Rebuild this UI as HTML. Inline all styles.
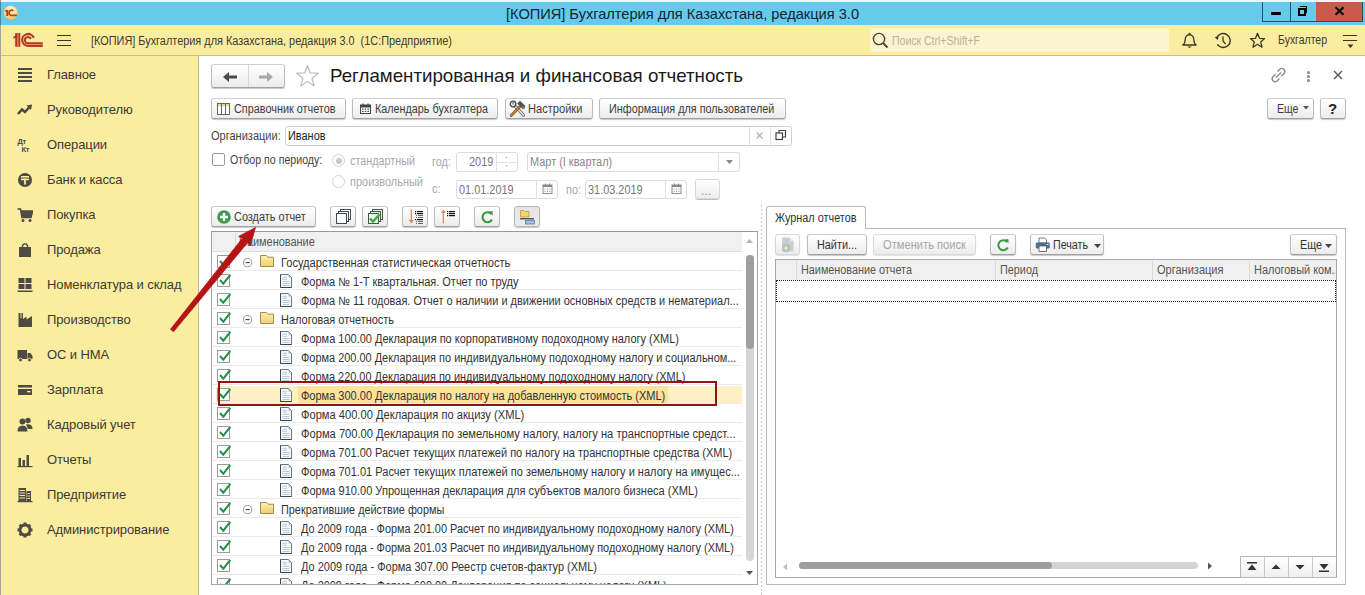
<!DOCTYPE html>
<html><head><meta charset="utf-8">
<style>
*{box-sizing:border-box;margin:0;padding:0}
html,body{width:1365px;height:595px;overflow:hidden;background:#fff;font-family:"Liberation Sans",sans-serif;color:#333}
.a{position:absolute}
.t{position:absolute;white-space:nowrap;line-height:1}
/* title bar */
#tb{left:0;top:0;width:1365px;height:25px;background:#66caea;border-top:2px solid #eef6f9}
#tbl{left:0;top:0;width:1px;height:595px;background:rgba(40,40,30,0.42);z-index:5}
/* top panel */
#tp{left:1px;top:25px;width:1364px;height:31px;background:#fbeda0;border-bottom:1px solid #cfbd74}
/* sidebar */
#sb{left:1px;top:56px;width:198px;height:539px;background:#fbeda0;border-right:1px solid #c6bd8c}
.si{position:absolute;left:47px;font-size:13px;color:#3b3a33;letter-spacing:-0.1px;white-space:nowrap;line-height:1}
.ic{position:absolute;left:17px}
.btn{position:absolute;height:21px;border:1px solid #c6c6c6;border-radius:3px;background:linear-gradient(#fff,#f1f1f1);box-shadow:0 1px 0 #a9a9a9;font-size:12px;color:#333;white-space:nowrap;line-height:19px}
.b{position:absolute;border:1px solid #bdbdbd;border-top-color:#cfcfcf;border-bottom-color:#a0a0a0;border-radius:3px;background:linear-gradient(#ffffff,#f4f4f4 60%,#ececec);box-shadow:0 1px 1px rgba(0,0,0,.22)}
.inp{position:absolute;height:19px;border:1px solid #d4d4d4;border-radius:3px;background:#fff;font-size:12px;line-height:17px;white-space:nowrap}
</style></head><body>
<div id="tb" class="a"></div>
<div id="tbl" class="a"></div>
<div class="t" style="left:506px;top:7px;font-size:14.6px;color:#0f2535">[КОПИЯ] Бухгалтерия для Казахстана, редакция 3.0</div>

<div id="tp" class="a"></div>

<!-- window buttons -->
<div class="a" style="left:1262px;top:2px;width:101px;height:20px;border:1px solid #1d4f6e;border-top:none;"></div>
<div class="a" style="left:1290px;top:2px;width:1px;height:20px;background:#1d4f6e"></div>
<div class="a" style="left:1316px;top:2px;width:46px;height:19px;background:#c9594b"></div>
<div class="a" style="left:1271px;top:12px;width:10px;height:3px;background:#050505"></div>
<div class="a" style="left:1300px;top:6px;width:7px;height:7px;border-top:1px solid #050505;border-right:1px solid #050505"></div>
<div class="a" style="left:1298px;top:8px;width:8px;height:8px;border:2px solid #050505"></div>
<svg class="a" style="left:1334px;top:6px" width="11" height="10" viewBox="0 0 11 10"><path d="M1.5 1.2 L9.5 8.8 M9.5 1.2 L1.5 8.8" stroke="#0a0a0a" stroke-width="2.1"/></svg>
<!-- app icon -->
<svg class="a" style="left:3px;top:5px" width="16" height="16" viewBox="0 0 16 16"><defs><radialGradient id="ag" cx="0.5" cy="0.3" r="0.7"><stop offset="0" stop-color="#fffbe6"/><stop offset="0.6" stop-color="#fbdc8a"/><stop offset="1" stop-color="#f0b860"/></radialGradient></defs><circle cx="7.7" cy="7.7" r="7" fill="url(#ag)"/><rect x="3.3" y="5" width="2" height="6" fill="#b8400f"/><path d="M1.8 6.6 L4 5" stroke="#b8400f" stroke-width="1.2"/><path d="M10.3 5.8 A2.6 2.6 0 1 0 9 10.4 H13.8" stroke="#b8400f" stroke-width="1.7" fill="none"/></svg>
<!-- logo -->
<svg class="a" style="left:13px;top:32px" width="31" height="16" viewBox="0 0 31 16">
<path d="M0.6 5.6 L4 3.2 V5.6 Z" fill="#b23a22" stroke="#b23a22" stroke-width="1.2"/>
<rect x="2.2" y="1" width="2.4" height="13.8" fill="#b23a22"/><rect x="5.2" y="1" width="2.1" height="13.8" fill="#b23a22"/><rect x="4.6" y="2" width="0.6" height="12.8" fill="#e27a62"/>
<path d="M20.8 5.8 A6 6 0 1 0 15.8 13.9 H29.8" stroke="#b23a22" stroke-width="2.1" fill="none"/>
<path d="M17.8 7 A3.1 3.1 0 1 0 15.8 11.2 H29.8" stroke="#b23a22" stroke-width="2" fill="none"/>
<path d="M19.4 6.4 A4.55 4.55 0 1 0 15.8 12.55 H29.8" stroke="#e8836a" stroke-width="0.6" fill="none"/>
</svg>
<div class="a" style="left:57px;top:35px;width:14px;height:1.4px;background:#3b3526"></div>
<div class="a" style="left:57px;top:40px;width:14px;height:1.4px;background:#3b3526"></div>
<div class="a" style="left:57px;top:45px;width:14px;height:1.4px;background:#3b3526"></div>
<div class="t" style="left:91px;top:35px;font-size:12px;color:#3d3a30;transform:scaleX(0.908);transform-origin:0 0">[КОПИЯ] Бухгалтерия для Казахстана, редакция 3.0&nbsp; (1С:Предприятие)</div>
<!-- search -->
<div class="a" style="left:870px;top:28px;width:299px;height:24px;background:#fcf4d0;border-radius:2px"></div>
<svg class="a" style="left:872px;top:32px" width="17" height="17" viewBox="0 0 17 17"><circle cx="7" cy="7" r="5.6" stroke="#4a4430" stroke-width="1.4" fill="none"/><path d="M11 11 L15.5 15.5" stroke="#4a4430" stroke-width="1.8"/></svg>
<div class="t" style="left:892px;top:35px;font-size:12px;color:#b9b39c;transform:scaleX(0.875);transform-origin:0 0">Поиск Ctrl+Shift+F</div>
<!-- bell -->
<svg class="a" style="left:1181px;top:32px" width="17" height="17" viewBox="0 0 17 17"><path d="M1.8 13 Q4 11.5 4.2 7.5 Q4.5 3.2 8.5 2.6 Q12.5 3.2 12.8 7.5 Q13 11.5 15.2 13 Z" stroke="#3b3526" stroke-width="1.3" fill="none" stroke-linejoin="round"/><circle cx="8.5" cy="1.8" r="1" fill="#3b3526"/><path d="M6.2 14.6 H10.8 L8.5 16 Z" fill="#3b3526"/></svg>
<!-- history -->
<svg class="a" style="left:1214px;top:32px" width="17" height="17" viewBox="0 0 17 17"><path d="M2.6 6.2 A7 7 0 1 1 3.4 12.4" stroke="#3b3526" stroke-width="1.4" fill="none"/><path d="M0.6 5 L4.6 4.4 L3.6 8 Z" fill="#3b3526"/><path d="M9 4.4 V9 L11.6 12" stroke="#3b3526" stroke-width="1.3" fill="none"/></svg>
<!-- star -->
<svg class="a" style="left:1249px;top:32px" width="17" height="17" viewBox="0 0 17 17"><path d="M8.5 1.3 L10.5 6.3 L15.6 6.6 L11.7 9.9 L13 15.2 L8.5 12.3 L4 15.2 L5.3 9.9 L1.4 6.6 L6.5 6.3 Z" stroke="#3b3526" stroke-width="1.3" fill="none" stroke-linejoin="round"/></svg>
<div class="t" style="left:1278px;top:34px;font-size:12px;color:#3d3a30;transform:scaleX(0.873);transform-origin:0 0">Бухгалтер</div>
<div class="a" style="left:1343px;top:35px;width:14px;height:1.4px;background:#3b3526"></div>
<div class="a" style="left:1343px;top:40px;width:14px;height:1.4px;background:#3b3526"></div>
<svg class="a" style="left:1347px;top:44px" width="7" height="5" viewBox="0 0 7 5"><path d="M0.5 0.5 H6.5 L3.5 4 Z" fill="#3b3526"/></svg>
<div id="sb" class="a"></div>
<svg class="a" style="left:17px;top:67px" width="16" height="16" viewBox="0 0 16 16"><rect x="1" y="1" width="14" height="2" fill="#4d4b42"/><rect x="1" y="5" width="14" height="2" fill="#4d4b42"/><rect x="1" y="9" width="14" height="2" fill="#4d4b42"/><rect x="1" y="13" width="14" height="2" fill="#4d4b42"/></svg>
<div class="si" style="top:68px">Главное</div>
<svg class="a" style="left:17px;top:102px" width="16" height="16" viewBox="0 0 16 16"><path d="M1 12 L5 7.5 L8 10 L12.5 5" stroke="#4d4b42" stroke-width="2.6" fill="none" stroke-linejoin="miter"/><path d="M9.5 3.5 L15 2.5 L14 8 Z" fill="#4d4b42"/></svg>
<div class="si" style="top:103px">Руководителю</div>
<svg class="a" style="left:17px;top:137px" width="16" height="16" viewBox="0 0 16 16"><text x="0.5" y="7" font-family="Liberation Sans" font-weight="bold" font-size="7.5" fill="#4d4b42" letter-spacing="-0.3">Дт</text><text x="4.5" y="15" font-family="Liberation Sans" font-weight="bold" font-size="7.5" fill="#4d4b42" letter-spacing="-0.3">Кт</text></svg>
<div class="si" style="top:138px">Операции</div>
<svg class="a" style="left:17px;top:172px" width="16" height="16" viewBox="0 0 16 16"><circle cx="8" cy="8" r="7" fill="#4d4b42"/><rect x="4" y="4" width="8" height="1.6" fill="#fbeda0"/><rect x="4" y="6.6" width="8" height="1.6" fill="#fbeda0"/><rect x="7.1" y="6.6" width="1.8" height="6" fill="#fbeda0"/></svg>
<div class="si" style="top:173px">Банк и касса</div>
<svg class="a" style="left:17px;top:207px" width="16" height="16" viewBox="0 0 16 16"><path d="M0.5 2 H3.5 L5 10.5 H14 L15.5 4 H4" stroke="#4d4b42" stroke-width="1.6" fill="none"/><path d="M4.2 4 H15.3 L13.8 10 H5.2 Z" fill="#4d4b42"/><circle cx="6" cy="13.5" r="1.5" fill="#4d4b42"/><circle cx="13" cy="13.5" r="1.5" fill="#4d4b42"/></svg>
<div class="si" style="top:208px">Покупка</div>
<svg class="a" style="left:17px;top:242px" width="16" height="16" viewBox="0 0 16 16"><path d="M2 5 H14 V15 H2 Z" fill="#4d4b42"/><path d="M5.5 6 V3.5 Q8 0 10.5 3.5 V6" stroke="#4d4b42" stroke-width="1.4" fill="none"/></svg>
<div class="si" style="top:243px">Продажа</div>
<svg class="a" style="left:17px;top:277px" width="16" height="16" viewBox="0 0 16 16"><rect x="1.5" y="1" width="6" height="5" fill="#4d4b42"/><rect x="8.5" y="1" width="6" height="5" fill="#4d4b42"/><rect x="1.5" y="7" width="6" height="5" fill="#4d4b42"/><rect x="8.5" y="7" width="6" height="5" fill="#4d4b42"/><rect x="0.5" y="13.5" width="15" height="1.5" fill="#4d4b42"/></svg>
<div class="si" style="top:278px">Номенклатура и склад</div>
<svg class="a" style="left:17px;top:312px" width="16" height="16" viewBox="0 0 16 16"><path d="M1.5 15 V1 H3.5 V6 L4.5 6 V1 H6 V7 L9.5 4.5 V7.5 L15 4 V15 Z" fill="#4d4b42"/></svg>
<div class="si" style="top:313px">Производство</div>
<svg class="a" style="left:17px;top:347px" width="16" height="16" viewBox="0 0 16 16"><path d="M0.5 3 H10 V12 H0.5 Z" fill="#4d4b42"/><path d="M10.5 6 H13.5 L15.5 9 V12 H10.5 Z" fill="#4d4b42"/><circle cx="3.5" cy="13" r="1.8" fill="#4d4b42" stroke="#fbeda0" stroke-width="0.8"/><circle cx="12.5" cy="13" r="1.8" fill="#4d4b42" stroke="#fbeda0" stroke-width="0.8"/></svg>
<div class="si" style="top:348px">ОС и НМА</div>
<svg class="a" style="left:17px;top:382px" width="16" height="16" viewBox="0 0 16 16"><rect x="1" y="3" width="14" height="10" fill="#4d4b42"/><rect x="1" y="5.5" width="14" height="1.5" fill="#fbeda0"/><rect x="10" y="9" width="3.5" height="1.3" fill="#fbeda0"/></svg>
<div class="si" style="top:383px">Зарплата</div>
<svg class="a" style="left:17px;top:417px" width="16" height="16" viewBox="0 0 16 16"><circle cx="5.5" cy="4.5" r="3" fill="#4d4b42"/><path d="M0.5 14.5 Q0.5 8.5 5.5 8.5 Q10.5 8.5 10.5 14.5 Z" fill="#4d4b42"/><circle cx="11" cy="3.5" r="2.7" fill="#4d4b42"/><path d="M9 7.5 Q15.5 6.5 15.5 12 H11 Z" fill="#4d4b42"/></svg>
<div class="si" style="top:418px">Кадровый учет</div>
<svg class="a" style="left:17px;top:452px" width="16" height="16" viewBox="0 0 16 16"><rect x="1.5" y="6" width="2.5" height="8" fill="#4d4b42"/><rect x="5.5" y="8" width="2.5" height="6" fill="#4d4b42"/><rect x="9.5" y="3" width="2.5" height="11" fill="#4d4b42"/><rect x="0.5" y="14" width="15" height="1.2" fill="#4d4b42"/></svg>
<div class="si" style="top:453px">Отчеты</div>
<svg class="a" style="left:17px;top:487px" width="16" height="16" viewBox="0 0 16 16"><path d="M1.5 1 H9 V14 H1.5 Z" fill="#4d4b42"/><path d="M9.5 4 H14 V14 H9.5 Z" fill="#4d4b42"/><g fill="#fbeda0"><rect x="2.5" y="3" width="5.5" height="1"/><rect x="2.5" y="5.5" width="5.5" height="1"/><rect x="2.5" y="8" width="5.5" height="1"/><rect x="2.5" y="10.5" width="5.5" height="1"/><rect x="10.5" y="6" width="2.5" height="1"/><rect x="10.5" y="8.5" width="2.5" height="1"/><rect x="10.5" y="11" width="2.5" height="1"/></g><rect x="0.5" y="14" width="15" height="1.2" fill="#4d4b42"/></svg>
<div class="si" style="top:488px">Предприятие</div>
<svg class="a" style="left:17px;top:522px" width="16" height="16" viewBox="0 0 16 16"><g transform="translate(8 8)"><circle r="5" fill="none" stroke="#4d4b42" stroke-width="2.8"/><rect x="-1.5" y="-7.5" width="3" height="3.5" fill="#4d4b42" transform="rotate(0)"/><rect x="-1.5" y="-7.5" width="3" height="3.5" fill="#4d4b42" transform="rotate(45)"/><rect x="-1.5" y="-7.5" width="3" height="3.5" fill="#4d4b42" transform="rotate(90)"/><rect x="-1.5" y="-7.5" width="3" height="3.5" fill="#4d4b42" transform="rotate(135)"/><rect x="-1.5" y="-7.5" width="3" height="3.5" fill="#4d4b42" transform="rotate(180)"/><rect x="-1.5" y="-7.5" width="3" height="3.5" fill="#4d4b42" transform="rotate(225)"/><rect x="-1.5" y="-7.5" width="3" height="3.5" fill="#4d4b42" transform="rotate(270)"/><rect x="-1.5" y="-7.5" width="3" height="3.5" fill="#4d4b42" transform="rotate(315)"/></g></svg>
<div class="si" style="top:523px">Администрирование</div>

<!--FORM-->
<div class="b" style="left:211px;top:64px;width:74px;height:24px;"></div>
<div class="a" style="left:248px;top:65px;width:1px;height:22px;background:#d6d6d6"></div>
<svg class="a" style="left:222px;top:71px" width="16" height="12" viewBox="0 0 16 12"><path d="M1 6 L7 1 V4.5 H15 V7.5 H7 V11 Z" fill="#4a4a4a"/></svg>
<svg class="a" style="left:258px;top:71px" width="16" height="12" viewBox="0 0 16 12"><path d="M15 6 L9 1 V4.5 H1 V7.5 H9 V11 Z" fill="#a8a8a8"/></svg>
<svg class="a" style="left:295px;top:64px" width="25" height="24" viewBox="0 0 25 24"><path d="M12.5 1.5 L15.3 9 L23.3 9.2 L17 14.2 L19.2 22 L12.5 17.5 L5.8 22 L8 14.2 L1.7 9.2 L9.7 9 Z" stroke="#bdbdbd" stroke-width="1.2" fill="none" stroke-linejoin="round"/></svg>
<div class="t" style="left:330px;top:66px;font-size:19px;color:#1a1a1a;transform:scaleX(0.9851);transform-origin:0 0;">Регламентированная и финансовая отчетность</div>
<svg class="a" style="left:1270px;top:67px" width="17" height="16" viewBox="0 0 17 16"><g stroke="#8a8a8a" stroke-width="1.4" fill="none"><path d="M7.5 4.5 L10 2 Q12 0.5 14 2.5 Q15.8 4.5 14 6.5 L11.5 9"/><path d="M9.5 11.5 L7 14 Q5 15.8 3 13.8 Q1.2 11.8 3 9.8 L5.5 7.3"/><path d="M6 10.5 L11 5.5"/></g></svg>
<div class="a" style="left:1307px;top:71px;width:3px;height:3px;background:#888;border-radius:50%"></div>
<div class="a" style="left:1307px;top:75px;width:3px;height:3px;background:#888;border-radius:50%"></div>
<div class="a" style="left:1307px;top:79px;width:3px;height:3px;background:#888;border-radius:50%"></div>
<svg class="a" style="left:1333px;top:70px" width="10" height="10" viewBox="0 0 10 10"><path d="M1 1 L9 9 M9 1 L1 9" stroke="#555" stroke-width="1.4"/></svg>
<div class="b" style="left:211px;top:98px;width:135px;height:21px;"></div>
<svg class="a" style="left:217px;top:103px" width="13" height="12" viewBox="0 0 13 12"><rect x="0.5" y="0.5" width="12" height="11" fill="#fff" stroke="#555" stroke-width="0.9"/><rect x="1" y="1" width="11" height="2.3" fill="#e6dc86"/><path d="M4.5 1 V11.5 M8.5 1 V11.5" stroke="#555" stroke-width="0.9"/></svg>
<div class="t" style="left:234px;top:103px;font-size:12px;color:#3c3c3c;transform:scaleX(0.9049);transform-origin:0 0;">Справочник отчетов</div>
<div class="b" style="left:352px;top:98px;width:146px;height:21px;"></div>
<svg class="a" style="left:360px;top:103px" width="11" height="11" viewBox="0 0 11 11"><rect x="0.5" y="2" width="10" height="8.5" fill="#fff" stroke="#444"/><rect x="0.5" y="2" width="10" height="2.5" fill="#444"/><path d="M3 0.5 V3 M8 0.5 V3" stroke="#444" stroke-width="1.2"/><g fill="#444"><rect x="2" y="5.5" width="1.5" height="1.2"/><rect x="4.7" y="5.5" width="1.5" height="1.2"/><rect x="7.4" y="5.5" width="1.5" height="1.2"/><rect x="2" y="7.8" width="1.5" height="1.2"/><rect x="4.7" y="7.8" width="1.5" height="1.2"/><rect x="7.4" y="7.8" width="1.5" height="1.2"/></g></svg>
<div class="t" style="left:375px;top:103px;font-size:12px;color:#3c3c3c;transform:scaleX(0.8991);transform-origin:0 0;">Календарь бухгалтера</div>
<div class="b" style="left:505px;top:98px;width:88px;height:21px;"></div>
<svg class="a" style="left:509px;top:100px" width="19" height="18" viewBox="0 0 19 18"><path d="M5 5 L14.5 15" stroke="#666" stroke-width="3.2" stroke-linecap="round"/><path d="M5 5 L14.5 15" stroke="#e4e4e4" stroke-width="1.6" stroke-linecap="round"/><circle cx="4" cy="4" r="2.8" fill="#eee" stroke="#4a4a4a" stroke-width="1.3"/><path d="M4 2.2 V4.5" stroke="#4a4a4a" stroke-width="1"/><path d="M2.2 15.5 L11.5 6" stroke="#8a5424" stroke-width="2.8" stroke-linecap="round"/><path d="M2.2 15.5 L11.5 6" stroke="#c98a4a" stroke-width="1.1" stroke-linecap="round"/><path d="M8 3.5 L11 0.8 L16.5 6 L13.8 9 Z" fill="#555"/><circle cx="14.5" cy="7.5" r="1.6" fill="#777"/></svg>
<div class="t" style="left:528px;top:103px;font-size:12px;color:#3c3c3c;transform:scaleX(0.9245);transform-origin:0 0;">Настройки</div>
<div class="b" style="left:599px;top:98px;width:187px;height:21px;"></div>
<div class="t" style="left:609px;top:103px;font-size:12px;color:#3c3c3c;transform:scaleX(0.9007);transform-origin:0 0;">Информация для пользователей</div>
<div class="b" style="left:1267px;top:98px;width:47px;height:21px;"></div>
<div class="t" style="left:1277px;top:103px;font-size:12px;color:#3c3c3c;transform:scaleX(0.8804);transform-origin:0 0;">Еще</div>
<svg class="a" style="left:1303px;top:106px" width="6" height="4" viewBox="0 0 6 4"><path d="M0 0 H6 L3 3.5 Z" fill="#555"/></svg>
<div class="b" style="left:1320px;top:98px;width:26px;height:21px;"></div>
<div class="t" style="left:1328px;top:101px;font-size:15px;color:#222;font-weight:bold;">?</div>
<div class="t" style="left:211px;top:130px;font-size:12px;color:#444;transform:scaleX(0.9180);transform-origin:0 0;">Организации:</div>
<div class="a" style="left:285px;top:126px;width:507px;height:20px;border:1px solid #d0d0d0;border-radius:3px;background:#fff"></div>
<div class="a" style="left:749px;top:127px;width:1px;height:18px;background:#e0e0e0"></div>
<div class="a" style="left:770px;top:127px;width:1px;height:18px;background:#e0e0e0"></div>
<div class="t" style="left:288px;top:130px;font-size:12px;color:#222;transform:scaleX(0.9100);transform-origin:0 0;">Иванов</div>
<svg class="a" style="left:755px;top:131px" width="9" height="9" viewBox="0 0 9 9"><path d="M1.5 1.5 L7.5 7.5 M7.5 1.5 L1.5 7.5" stroke="#b0b0b0" stroke-width="1.2"/></svg>
<svg class="a" style="left:775px;top:129px" width="12" height="12" viewBox="0 0 12 12"><rect x="1" y="4" width="6.5" height="6.5" fill="#fff" stroke="#444" stroke-width="1.2"/><path d="M4 4 V1.5 H10.5 V8 H7.5" fill="none" stroke="#444" stroke-width="1.2"/></svg>
<div class="a" style="left:212px;top:153px;width:13px;height:13px;border:1px solid #9a9a9a;border-radius:2px;background:#fff"></div>
<div class="t" style="left:230px;top:154px;font-size:12px;color:#444;transform:scaleX(0.8859);transform-origin:0 0;">Отбор по периоду:</div>
<div class="a" style="left:332px;top:154px;width:13px;height:13px;border:1px solid #d2d2d2;border-radius:50%;background:#fff"></div>
<div class="a" style="left:335.5px;top:157.5px;width:6px;height:6px;border-radius:50%;background:#c8c8c8"></div>
<div class="t" style="left:350px;top:155px;font-size:12px;color:#a9a9a9;transform:scaleX(0.9002);transform-origin:0 0;">стандартный</div>
<div class="a" style="left:332px;top:175px;width:13px;height:13px;border:1px solid #d2d2d2;border-radius:50%;background:#fff"></div>
<div class="t" style="left:350px;top:176px;font-size:12px;color:#a9a9a9;transform:scaleX(0.9134);transform-origin:0 0;">произвольный</div>
<div class="t" style="left:432px;top:156px;font-size:12px;color:#a9a9a9;transform:scaleX(0.9100);transform-origin:0 0;">год:</div>
<div class="a" style="left:456px;top:152px;width:62px;height:20px;border:1px solid #dcdcdc;border-radius:3px;background:#fff"></div>
<div class="a" style="left:496px;top:153px;width:1px;height:18px;background:#e2e2e2"></div>
<div class="a" style="left:497px;top:162px;width:20px;height:1px;background:#e2e2e2"></div>
<div class="t" style="left:469px;top:156px;font-size:12px;color:#777;transform:scaleX(0.9100);transform-origin:0 0;">2019</div>
<svg class="a" style="left:503px;top:155px" width="7" height="15" viewBox="0 0 7 15"><path d="M2.5 3 L3.5 1.8 L4.5 3 Z M2.5 10.5 L3.5 11.7 L4.5 10.5 Z" fill="#888"/></svg>
<div class="a" style="left:527px;top:152px;width:213px;height:20px;border:1px solid #dcdcdc;border-radius:3px;background:#fff"></div>
<div class="a" style="left:718px;top:153px;width:1px;height:18px;background:#e2e2e2"></div>
<div class="t" style="left:530px;top:156px;font-size:12px;color:#888;transform:scaleX(0.9100);transform-origin:0 0;">Март (I квартал)</div>
<svg class="a" style="left:726px;top:160px" width="7" height="4" viewBox="0 0 7 4"><path d="M0 0 H7 L3.5 4 Z" fill="#888"/></svg>
<div class="t" style="left:432px;top:183px;font-size:12px;color:#a9a9a9;transform:scaleX(0.9100);transform-origin:0 0;">с:</div>
<div class="a" style="left:456px;top:180px;width:102px;height:19px;border:1px solid #dcdcdc;border-radius:3px;background:#fff"></div>
<div class="a" style="left:536px;top:181px;width:1px;height:17px;background:#e2e2e2"></div>
<div class="t" style="left:459px;top:184px;font-size:12px;color:#777;transform:scaleX(0.9100);transform-origin:0 0;">01.01.2019</div>
<svg class="a" style="left:542px;top:183px" width="12" height="12" viewBox="0 0 12 12"><rect x="1" y="2" width="9" height="8.5" fill="#fff" stroke="#8a8a8a"/><rect x="1" y="2" width="9" height="2" fill="#8a8a8a"/><path d="M3.5 0.5 V3 M7.5 0.5 V3" stroke="#8a8a8a"/><g fill="#999"><rect x="2.5" y="5.5" width="1.2" height="1"/><rect x="4.9" y="5.5" width="1.2" height="1"/><rect x="7.3" y="5.5" width="1.2" height="1"/><rect x="2.5" y="7.8" width="1.2" height="1"/><rect x="4.9" y="7.8" width="1.2" height="1"/><rect x="7.3" y="7.8" width="1.2" height="1"/></g></svg>
<div class="t" style="left:566px;top:184px;font-size:12px;color:#a9a9a9;transform:scaleX(0.9100);transform-origin:0 0;">по:</div>
<div class="a" style="left:585px;top:180px;width:102px;height:19px;border:1px solid #dcdcdc;border-radius:3px;background:#fff"></div>
<div class="a" style="left:665px;top:181px;width:1px;height:17px;background:#e2e2e2"></div>
<div class="t" style="left:588px;top:184px;font-size:12px;color:#777;transform:scaleX(0.9100);transform-origin:0 0;">31.03.2019</div>
<svg class="a" style="left:671px;top:183px" width="12" height="12" viewBox="0 0 12 12"><rect x="1" y="2" width="9" height="8.5" fill="#fff" stroke="#8a8a8a"/><rect x="1" y="2" width="9" height="2" fill="#8a8a8a"/><path d="M3.5 0.5 V3 M7.5 0.5 V3" stroke="#8a8a8a"/><g fill="#999"><rect x="2.5" y="5.5" width="1.2" height="1"/><rect x="4.9" y="5.5" width="1.2" height="1"/><rect x="7.3" y="5.5" width="1.2" height="1"/><rect x="2.5" y="7.8" width="1.2" height="1"/><rect x="4.9" y="7.8" width="1.2" height="1"/><rect x="7.3" y="7.8" width="1.2" height="1"/></g></svg>
<div class="b" style="left:695px;top:179px;width:25px;height:20px;border-color:#d8d8d8;box-shadow:0 1px 0 #bdbdbd"></div>
<div class="t" style="left:701px;top:185px;font-size:12px;color:#999;">...</div>
<div class="b" style="left:211px;top:206px;width:105px;height:21px;"></div>
<svg class="a" style="left:217px;top:210px" width="14" height="14" viewBox="0 0 14 14"><circle cx="7" cy="7" r="6.8" fill="#3e9c4c"/><path d="M7 3 V11 M3 7 H11" stroke="#fff" stroke-width="2.4"/></svg>
<div class="t" style="left:234px;top:211px;font-size:12px;color:#3c3c3c;transform:scaleX(0.9103);transform-origin:0 0;">Создать отчет</div>
<div class="b" style="left:330px;top:206px;width:26px;height:21px;"></div>
<svg class="a" style="left:335px;top:208px" width="17" height="17" viewBox="0 0 17 17"><g fill="#fff" stroke="#3d4a55" stroke-width="1"><rect x="5.5" y="1.5" width="10" height="10"/><rect x="3.5" y="3.5" width="10" height="10"/><rect x="1.5" y="5.5" width="10" height="10"/></g></svg>
<div class="b" style="left:362px;top:206px;width:26px;height:21px;"></div>
<svg class="a" style="left:367px;top:208px" width="17" height="17" viewBox="0 0 17 17"><g fill="#eaf3e8" stroke="#3d5a45" stroke-width="1"><rect x="5.5" y="1.5" width="10" height="10"/><rect x="3.5" y="3.5" width="10" height="10"/><rect x="1.5" y="5.5" width="10" height="10"/></g><path d="M3 10.5 L6 13.5 L12.5 6.5" stroke="#3faa3a" stroke-width="2.4" fill="none"/></svg>
<div class="b" style="left:402px;top:206px;width:26px;height:21px;"></div>
<svg class="a" style="left:405px;top:208px" width="20" height="17" viewBox="0 0 20 17"><path d="M6.3 1.5 V14" stroke="#d0855a" stroke-width="1.2"/><path d="M4 12 H8.6 L6.3 15.5 Z" fill="#d0855a"/><g fill="#111"><rect x="10" y="3" width="1.2" height="1.2"/><rect x="12" y="3" width="6" height="1.2"/><rect x="10" y="5" width="1.2" height="1.2"/><rect x="12" y="5" width="6" height="1.2"/><rect x="10" y="11" width="1.2" height="1.2"/><rect x="12" y="11" width="6" height="1.2"/></g><g fill="#666"><rect x="11" y="7" width="1" height="1"/><rect x="13" y="7" width="5" height="1"/><rect x="11" y="9" width="1" height="1"/><rect x="13" y="9" width="5" height="1"/><rect x="11" y="13" width="1" height="1"/><rect x="13" y="13" width="5" height="1"/><rect x="11" y="15" width="1" height="1"/><rect x="13" y="15" width="5" height="1"/></g></svg>
<div class="b" style="left:434px;top:206px;width:26px;height:21px;"></div>
<svg class="a" style="left:437px;top:208px" width="20" height="17" viewBox="0 0 20 17"><path d="M6.3 3 V15.5" stroke="#d0855a" stroke-width="1.2"/><path d="M4 5 H8.6 L6.3 1.5 Z" fill="#d0855a"/><g fill="#111"><rect x="10" y="3" width="1.2" height="1.2"/><rect x="12" y="3" width="6" height="1.2"/><rect x="10" y="5" width="1.2" height="1.2"/><rect x="12" y="5" width="6" height="1.2"/><rect x="10" y="7" width="1.2" height="1.2"/><rect x="12" y="7" width="6" height="1.2"/></g></svg>
<div class="b" style="left:474px;top:206px;width:26px;height:21px;"></div>
<svg class="a" style="left:480px;top:210px" width="14" height="14" viewBox="0 0 14 14"><path d="M11.5 4.2 A5 5 0 1 0 12 9.5" stroke="#3a9a3e" stroke-width="2.2" fill="none"/><path d="M8.5 1.2 H12.6 V5.5 Z" fill="#3a9a3e"/></svg>
<div class="b" style="left:514px;top:206px;width:26px;height:21px;background:linear-gradient(#e4e4e4,#ececec);border-color:#b5b5b5"></div>
<svg class="a" style="left:519px;top:208px" width="17" height="17" viewBox="0 0 17 17"><path d="M1.5 2.5 H5 L6 3.5 H10 V9 H1.5 Z" fill="#f4d57a" stroke="#b8973a" stroke-width="0.8"/><rect x="1" y="10.2" width="14" height="1.2" fill="#333"/><rect x="6.5" y="12.5" width="9" height="3.5" fill="#9cc0e6" stroke="#5b7fa8" stroke-width="0.8"/></svg>
<div class="a" style="left:211px;top:231px;width:547px;height:354px;border:1px solid #a6a6a6;border-top-color:#9a9a9a;background:#fff"></div>
<div class="a" style="left:212px;top:232px;width:530px;height:20px;background:#f0f0f0;border-bottom:1px solid #dedede"></div>
<div class="a" style="left:235px;top:233px;width:1px;height:19px;background:#dcdcdc"></div>
<div class="t" style="left:239px;top:236px;font-size:12px;color:#555;transform:scaleX(0.9100);transform-origin:0 0;">Наименование</div>
<div class="a" style="left:212px;top:252px;width:530px;height:332px;overflow:hidden">
<div class="a" style="left:0px;top:18px;width:530px;height:1px;background:#ebebeb"></div>
<svg class="a" style="left:5px;top:3px" width="14" height="13" viewBox="0 0 14 13"><rect x="0.5" y="0.5" width="12" height="12" fill="#fff" stroke="#9b9b9b"/><path d="M3 6 L6.3 9.6 L13.3 1" stroke="#239048" stroke-width="2" fill="none"/></svg>
<svg class="a" style="left:31px;top:6px" width="10" height="10" viewBox="0 0 10 10"><circle cx="4.6" cy="4.6" r="4.1" fill="#fff" stroke="#8c8c8c" stroke-width="0.9"/><path d="M2.5 4.6 H6.7" stroke="#444" stroke-width="1.1"/></svg>
<svg class="a" style="left:48px;top:3px" width="14" height="12" viewBox="0 0 14 12"><defs><linearGradient id="fg" x1="0" y1="0" x2="0" y2="1"><stop offset="0" stop-color="#fdf0b0"/><stop offset="1" stop-color="#efcf72"/></linearGradient></defs><path d="M0.5 0.5 H6.5 L8 2.2 H13.5 V11.5 H0.5 Z" fill="url(#fg)" stroke="#a48c44"/></svg>
<div class="t" style="left:68.5px;top:5px;font-size:12px;color:#333;transform:scaleX(0.9228);transform-origin:0 0;">Государственная статистическая отчетность</div>
<div class="a" style="left:0px;top:37px;width:530px;height:1px;background:#ebebeb"></div>
<svg class="a" style="left:5px;top:22px" width="14" height="13" viewBox="0 0 14 13"><rect x="0.5" y="0.5" width="12" height="12" fill="#fff" stroke="#9b9b9b"/><path d="M3 6 L6.3 9.6 L13.3 1" stroke="#239048" stroke-width="2" fill="none"/></svg>
<svg class="a" style="left:68px;top:22px" width="12" height="14" viewBox="0 0 12 14"><path d="M0.5 0.5 H8.5 L11.5 3.5 V13.5 H0.5 Z" fill="#f5f9fc" stroke="#6c7680"/><path d="M0.5 0.5 V13.5 H11.5" fill="none" stroke="#3c444c"/><path d="M8.5 0.8 V3.5 H11.2 Z" fill="#aab6c2"/><g fill="#a9bdd0"><rect x="2.5" y="2.8" width="4.5" height="0.8"/><rect x="2.5" y="4.8" width="4.5" height="0.8"/><rect x="2.5" y="7" width="7" height="0.8"/><rect x="2.5" y="9" width="7" height="0.8"/><rect x="2.5" y="11" width="7" height="0.8"/></g></svg>
<div class="t" style="left:88.5px;top:24px;font-size:12px;color:#333;transform:scaleX(0.9141);transform-origin:0 0;">Форма № 1-Т квартальная. Отчет по труду</div>
<div class="a" style="left:0px;top:56px;width:530px;height:1px;background:#ebebeb"></div>
<svg class="a" style="left:5px;top:41px" width="14" height="13" viewBox="0 0 14 13"><rect x="0.5" y="0.5" width="12" height="12" fill="#fff" stroke="#9b9b9b"/><path d="M3 6 L6.3 9.6 L13.3 1" stroke="#239048" stroke-width="2" fill="none"/></svg>
<svg class="a" style="left:68px;top:41px" width="12" height="14" viewBox="0 0 12 14"><path d="M0.5 0.5 H8.5 L11.5 3.5 V13.5 H0.5 Z" fill="#f5f9fc" stroke="#6c7680"/><path d="M0.5 0.5 V13.5 H11.5" fill="none" stroke="#3c444c"/><path d="M8.5 0.8 V3.5 H11.2 Z" fill="#aab6c2"/><g fill="#a9bdd0"><rect x="2.5" y="2.8" width="4.5" height="0.8"/><rect x="2.5" y="4.8" width="4.5" height="0.8"/><rect x="2.5" y="7" width="7" height="0.8"/><rect x="2.5" y="9" width="7" height="0.8"/><rect x="2.5" y="11" width="7" height="0.8"/></g></svg>
<div class="t" style="left:88.5px;top:43px;font-size:12px;color:#333;transform:scaleX(0.9143);transform-origin:0 0;">Форма № 11 годовая. Отчет о наличии и движении основных средств и нематериал...</div>
<div class="a" style="left:0px;top:75px;width:530px;height:1px;background:#ebebeb"></div>
<svg class="a" style="left:5px;top:60px" width="14" height="13" viewBox="0 0 14 13"><rect x="0.5" y="0.5" width="12" height="12" fill="#fff" stroke="#9b9b9b"/><path d="M3 6 L6.3 9.6 L13.3 1" stroke="#239048" stroke-width="2" fill="none"/></svg>
<svg class="a" style="left:31px;top:63px" width="10" height="10" viewBox="0 0 10 10"><circle cx="4.6" cy="4.6" r="4.1" fill="#fff" stroke="#8c8c8c" stroke-width="0.9"/><path d="M2.5 4.6 H6.7" stroke="#444" stroke-width="1.1"/></svg>
<svg class="a" style="left:48px;top:60px" width="14" height="12" viewBox="0 0 14 12"><defs><linearGradient id="fg" x1="0" y1="0" x2="0" y2="1"><stop offset="0" stop-color="#fdf0b0"/><stop offset="1" stop-color="#efcf72"/></linearGradient></defs><path d="M0.5 0.5 H6.5 L8 2.2 H13.5 V11.5 H0.5 Z" fill="url(#fg)" stroke="#a48c44"/></svg>
<div class="t" style="left:68.5px;top:62px;font-size:12px;color:#333;transform:scaleX(0.9145);transform-origin:0 0;">Налоговая отчетность</div>
<div class="a" style="left:0px;top:94px;width:530px;height:1px;background:#ebebeb"></div>
<svg class="a" style="left:5px;top:79px" width="14" height="13" viewBox="0 0 14 13"><rect x="0.5" y="0.5" width="12" height="12" fill="#fff" stroke="#9b9b9b"/><path d="M3 6 L6.3 9.6 L13.3 1" stroke="#239048" stroke-width="2" fill="none"/></svg>
<svg class="a" style="left:68px;top:79px" width="12" height="14" viewBox="0 0 12 14"><path d="M0.5 0.5 H8.5 L11.5 3.5 V13.5 H0.5 Z" fill="#f5f9fc" stroke="#6c7680"/><path d="M0.5 0.5 V13.5 H11.5" fill="none" stroke="#3c444c"/><path d="M8.5 0.8 V3.5 H11.2 Z" fill="#aab6c2"/><g fill="#a9bdd0"><rect x="2.5" y="2.8" width="4.5" height="0.8"/><rect x="2.5" y="4.8" width="4.5" height="0.8"/><rect x="2.5" y="7" width="7" height="0.8"/><rect x="2.5" y="9" width="7" height="0.8"/><rect x="2.5" y="11" width="7" height="0.8"/></g></svg>
<div class="t" style="left:88.5px;top:81px;font-size:12px;color:#333;transform:scaleX(0.9159);transform-origin:0 0;">Форма 100.00 Декларация по корпоративному подоходному налогу (XML)</div>
<div class="a" style="left:0px;top:113px;width:530px;height:1px;background:#ebebeb"></div>
<svg class="a" style="left:5px;top:98px" width="14" height="13" viewBox="0 0 14 13"><rect x="0.5" y="0.5" width="12" height="12" fill="#fff" stroke="#9b9b9b"/><path d="M3 6 L6.3 9.6 L13.3 1" stroke="#239048" stroke-width="2" fill="none"/></svg>
<svg class="a" style="left:68px;top:98px" width="12" height="14" viewBox="0 0 12 14"><path d="M0.5 0.5 H8.5 L11.5 3.5 V13.5 H0.5 Z" fill="#f5f9fc" stroke="#6c7680"/><path d="M0.5 0.5 V13.5 H11.5" fill="none" stroke="#3c444c"/><path d="M8.5 0.8 V3.5 H11.2 Z" fill="#aab6c2"/><g fill="#a9bdd0"><rect x="2.5" y="2.8" width="4.5" height="0.8"/><rect x="2.5" y="4.8" width="4.5" height="0.8"/><rect x="2.5" y="7" width="7" height="0.8"/><rect x="2.5" y="9" width="7" height="0.8"/><rect x="2.5" y="11" width="7" height="0.8"/></g></svg>
<div class="t" style="left:88.5px;top:100px;font-size:12px;color:#333;transform:scaleX(0.9122);transform-origin:0 0;">Форма 200.00 Декларация по индивидуальному подоходному налогу и социальном...</div>
<div class="a" style="left:0px;top:132px;width:530px;height:1px;background:#ebebeb"></div>
<svg class="a" style="left:5px;top:117px" width="14" height="13" viewBox="0 0 14 13"><rect x="0.5" y="0.5" width="12" height="12" fill="#fff" stroke="#9b9b9b"/><path d="M3 6 L6.3 9.6 L13.3 1" stroke="#239048" stroke-width="2" fill="none"/></svg>
<svg class="a" style="left:68px;top:117px" width="12" height="14" viewBox="0 0 12 14"><path d="M0.5 0.5 H8.5 L11.5 3.5 V13.5 H0.5 Z" fill="#f5f9fc" stroke="#6c7680"/><path d="M0.5 0.5 V13.5 H11.5" fill="none" stroke="#3c444c"/><path d="M8.5 0.8 V3.5 H11.2 Z" fill="#aab6c2"/><g fill="#a9bdd0"><rect x="2.5" y="2.8" width="4.5" height="0.8"/><rect x="2.5" y="4.8" width="4.5" height="0.8"/><rect x="2.5" y="7" width="7" height="0.8"/><rect x="2.5" y="9" width="7" height="0.8"/><rect x="2.5" y="11" width="7" height="0.8"/></g></svg>
<div class="t" style="left:88.5px;top:119px;font-size:12px;color:#333;transform:scaleX(0.9108);transform-origin:0 0;">Форма 220.00 Декларация по индивидуальному подоходному налогу (XML)</div>
<div class="a" style="left:4px;top:134px;width:526px;height:18px;background:#fdf0c4"></div>
<div class="a" style="left:86px;top:134px;width:370px;height:18px;background:#fbe39a"></div>
<div class="a" style="left:0px;top:151px;width:530px;height:1px;background:#ebebeb"></div>
<svg class="a" style="left:5px;top:136px" width="14" height="13" viewBox="0 0 14 13"><rect x="0.5" y="0.5" width="12" height="12" fill="#fff" stroke="#9b9b9b"/><path d="M3 6 L6.3 9.6 L13.3 1" stroke="#239048" stroke-width="2" fill="none"/></svg>
<svg class="a" style="left:68px;top:136px" width="12" height="14" viewBox="0 0 12 14"><path d="M0.5 0.5 H8.5 L11.5 3.5 V13.5 H0.5 Z" fill="#f5f9fc" stroke="#6c7680"/><path d="M0.5 0.5 V13.5 H11.5" fill="none" stroke="#3c444c"/><path d="M8.5 0.8 V3.5 H11.2 Z" fill="#aab6c2"/><g fill="#a9bdd0"><rect x="2.5" y="2.8" width="4.5" height="0.8"/><rect x="2.5" y="4.8" width="4.5" height="0.8"/><rect x="2.5" y="7" width="7" height="0.8"/><rect x="2.5" y="9" width="7" height="0.8"/><rect x="2.5" y="11" width="7" height="0.8"/></g></svg>
<div class="t" style="left:88.5px;top:138px;font-size:12px;color:#333;transform:scaleX(0.9172);transform-origin:0 0;">Форма 300.00 Декларация по налогу на добавленную стоимость (XML)</div>
<div class="a" style="left:0px;top:170px;width:530px;height:1px;background:#ebebeb"></div>
<svg class="a" style="left:5px;top:155px" width="14" height="13" viewBox="0 0 14 13"><rect x="0.5" y="0.5" width="12" height="12" fill="#fff" stroke="#9b9b9b"/><path d="M3 6 L6.3 9.6 L13.3 1" stroke="#239048" stroke-width="2" fill="none"/></svg>
<svg class="a" style="left:68px;top:155px" width="12" height="14" viewBox="0 0 12 14"><path d="M0.5 0.5 H8.5 L11.5 3.5 V13.5 H0.5 Z" fill="#f5f9fc" stroke="#6c7680"/><path d="M0.5 0.5 V13.5 H11.5" fill="none" stroke="#3c444c"/><path d="M8.5 0.8 V3.5 H11.2 Z" fill="#aab6c2"/><g fill="#a9bdd0"><rect x="2.5" y="2.8" width="4.5" height="0.8"/><rect x="2.5" y="4.8" width="4.5" height="0.8"/><rect x="2.5" y="7" width="7" height="0.8"/><rect x="2.5" y="9" width="7" height="0.8"/><rect x="2.5" y="11" width="7" height="0.8"/></g></svg>
<div class="t" style="left:88.5px;top:157px;font-size:12px;color:#333;transform:scaleX(0.9275);transform-origin:0 0;">Форма 400.00 Декларация по акцизу (XML)</div>
<div class="a" style="left:0px;top:189px;width:530px;height:1px;background:#ebebeb"></div>
<svg class="a" style="left:5px;top:174px" width="14" height="13" viewBox="0 0 14 13"><rect x="0.5" y="0.5" width="12" height="12" fill="#fff" stroke="#9b9b9b"/><path d="M3 6 L6.3 9.6 L13.3 1" stroke="#239048" stroke-width="2" fill="none"/></svg>
<svg class="a" style="left:68px;top:174px" width="12" height="14" viewBox="0 0 12 14"><path d="M0.5 0.5 H8.5 L11.5 3.5 V13.5 H0.5 Z" fill="#f5f9fc" stroke="#6c7680"/><path d="M0.5 0.5 V13.5 H11.5" fill="none" stroke="#3c444c"/><path d="M8.5 0.8 V3.5 H11.2 Z" fill="#aab6c2"/><g fill="#a9bdd0"><rect x="2.5" y="2.8" width="4.5" height="0.8"/><rect x="2.5" y="4.8" width="4.5" height="0.8"/><rect x="2.5" y="7" width="7" height="0.8"/><rect x="2.5" y="9" width="7" height="0.8"/><rect x="2.5" y="11" width="7" height="0.8"/></g></svg>
<div class="t" style="left:88.5px;top:176px;font-size:12px;color:#333;transform:scaleX(0.9300);transform-origin:0 0;">Форма 700.00 Декларация по земельному налогу, налогу на транспортные средст...</div>
<div class="a" style="left:0px;top:208px;width:530px;height:1px;background:#ebebeb"></div>
<svg class="a" style="left:5px;top:193px" width="14" height="13" viewBox="0 0 14 13"><rect x="0.5" y="0.5" width="12" height="12" fill="#fff" stroke="#9b9b9b"/><path d="M3 6 L6.3 9.6 L13.3 1" stroke="#239048" stroke-width="2" fill="none"/></svg>
<svg class="a" style="left:68px;top:193px" width="12" height="14" viewBox="0 0 12 14"><path d="M0.5 0.5 H8.5 L11.5 3.5 V13.5 H0.5 Z" fill="#f5f9fc" stroke="#6c7680"/><path d="M0.5 0.5 V13.5 H11.5" fill="none" stroke="#3c444c"/><path d="M8.5 0.8 V3.5 H11.2 Z" fill="#aab6c2"/><g fill="#a9bdd0"><rect x="2.5" y="2.8" width="4.5" height="0.8"/><rect x="2.5" y="4.8" width="4.5" height="0.8"/><rect x="2.5" y="7" width="7" height="0.8"/><rect x="2.5" y="9" width="7" height="0.8"/><rect x="2.5" y="11" width="7" height="0.8"/></g></svg>
<div class="t" style="left:88.5px;top:195px;font-size:12px;color:#333;transform:scaleX(0.9168);transform-origin:0 0;">Форма 701.00 Расчет текущих платежей по налогу на транспортные средства (XML)</div>
<div class="a" style="left:0px;top:227px;width:530px;height:1px;background:#ebebeb"></div>
<svg class="a" style="left:5px;top:212px" width="14" height="13" viewBox="0 0 14 13"><rect x="0.5" y="0.5" width="12" height="12" fill="#fff" stroke="#9b9b9b"/><path d="M3 6 L6.3 9.6 L13.3 1" stroke="#239048" stroke-width="2" fill="none"/></svg>
<svg class="a" style="left:68px;top:212px" width="12" height="14" viewBox="0 0 12 14"><path d="M0.5 0.5 H8.5 L11.5 3.5 V13.5 H0.5 Z" fill="#f5f9fc" stroke="#6c7680"/><path d="M0.5 0.5 V13.5 H11.5" fill="none" stroke="#3c444c"/><path d="M8.5 0.8 V3.5 H11.2 Z" fill="#aab6c2"/><g fill="#a9bdd0"><rect x="2.5" y="2.8" width="4.5" height="0.8"/><rect x="2.5" y="4.8" width="4.5" height="0.8"/><rect x="2.5" y="7" width="7" height="0.8"/><rect x="2.5" y="9" width="7" height="0.8"/><rect x="2.5" y="11" width="7" height="0.8"/></g></svg>
<div class="t" style="left:88.5px;top:214px;font-size:12px;color:#333;transform:scaleX(0.9195);transform-origin:0 0;">Форма 701.01 Расчет текущих платежей по земельному налогу и налогу на имущес...</div>
<div class="a" style="left:0px;top:246px;width:530px;height:1px;background:#ebebeb"></div>
<svg class="a" style="left:5px;top:231px" width="14" height="13" viewBox="0 0 14 13"><rect x="0.5" y="0.5" width="12" height="12" fill="#fff" stroke="#9b9b9b"/><path d="M3 6 L6.3 9.6 L13.3 1" stroke="#239048" stroke-width="2" fill="none"/></svg>
<svg class="a" style="left:68px;top:231px" width="12" height="14" viewBox="0 0 12 14"><path d="M0.5 0.5 H8.5 L11.5 3.5 V13.5 H0.5 Z" fill="#f5f9fc" stroke="#6c7680"/><path d="M0.5 0.5 V13.5 H11.5" fill="none" stroke="#3c444c"/><path d="M8.5 0.8 V3.5 H11.2 Z" fill="#aab6c2"/><g fill="#a9bdd0"><rect x="2.5" y="2.8" width="4.5" height="0.8"/><rect x="2.5" y="4.8" width="4.5" height="0.8"/><rect x="2.5" y="7" width="7" height="0.8"/><rect x="2.5" y="9" width="7" height="0.8"/><rect x="2.5" y="11" width="7" height="0.8"/></g></svg>
<div class="t" style="left:88.5px;top:233px;font-size:12px;color:#333;transform:scaleX(0.9208);transform-origin:0 0;">Форма 910.00 Упрощенная декларация для субъектов малого бизнеса (XML)</div>
<div class="a" style="left:0px;top:265px;width:530px;height:1px;background:#ebebeb"></div>
<svg class="a" style="left:5px;top:250px" width="14" height="13" viewBox="0 0 14 13"><rect x="0.5" y="0.5" width="12" height="12" fill="#fff" stroke="#9b9b9b"/><path d="M3 6 L6.3 9.6 L13.3 1" stroke="#239048" stroke-width="2" fill="none"/></svg>
<svg class="a" style="left:31px;top:253px" width="10" height="10" viewBox="0 0 10 10"><circle cx="4.6" cy="4.6" r="4.1" fill="#fff" stroke="#8c8c8c" stroke-width="0.9"/><path d="M2.5 4.6 H6.7" stroke="#444" stroke-width="1.1"/></svg>
<svg class="a" style="left:48px;top:250px" width="14" height="12" viewBox="0 0 14 12"><defs><linearGradient id="fg" x1="0" y1="0" x2="0" y2="1"><stop offset="0" stop-color="#fdf0b0"/><stop offset="1" stop-color="#efcf72"/></linearGradient></defs><path d="M0.5 0.5 H6.5 L8 2.2 H13.5 V11.5 H0.5 Z" fill="url(#fg)" stroke="#a48c44"/></svg>
<div class="t" style="left:68.5px;top:252px;font-size:12px;color:#333;transform:scaleX(0.9053);transform-origin:0 0;">Прекратившие действие формы</div>
<div class="a" style="left:0px;top:284px;width:530px;height:1px;background:#ebebeb"></div>
<svg class="a" style="left:5px;top:269px" width="14" height="13" viewBox="0 0 14 13"><rect x="0.5" y="0.5" width="12" height="12" fill="#fff" stroke="#9b9b9b"/><path d="M3 6 L6.3 9.6 L13.3 1" stroke="#239048" stroke-width="2" fill="none"/></svg>
<svg class="a" style="left:68px;top:269px" width="12" height="14" viewBox="0 0 12 14"><path d="M0.5 0.5 H8.5 L11.5 3.5 V13.5 H0.5 Z" fill="#f5f9fc" stroke="#6c7680"/><path d="M0.5 0.5 V13.5 H11.5" fill="none" stroke="#3c444c"/><path d="M8.5 0.8 V3.5 H11.2 Z" fill="#aab6c2"/><g fill="#a9bdd0"><rect x="2.5" y="2.8" width="4.5" height="0.8"/><rect x="2.5" y="4.8" width="4.5" height="0.8"/><rect x="2.5" y="7" width="7" height="0.8"/><rect x="2.5" y="9" width="7" height="0.8"/><rect x="2.5" y="11" width="7" height="0.8"/></g></svg>
<div class="t" style="left:88.5px;top:271px;font-size:12px;color:#333;transform:scaleX(0.9090);transform-origin:0 0;">До 2009 года - Форма 201.00 Расчет по индивидуальному подоходному налогу (XML)</div>
<div class="a" style="left:0px;top:303px;width:530px;height:1px;background:#ebebeb"></div>
<svg class="a" style="left:5px;top:288px" width="14" height="13" viewBox="0 0 14 13"><rect x="0.5" y="0.5" width="12" height="12" fill="#fff" stroke="#9b9b9b"/><path d="M3 6 L6.3 9.6 L13.3 1" stroke="#239048" stroke-width="2" fill="none"/></svg>
<svg class="a" style="left:68px;top:288px" width="12" height="14" viewBox="0 0 12 14"><path d="M0.5 0.5 H8.5 L11.5 3.5 V13.5 H0.5 Z" fill="#f5f9fc" stroke="#6c7680"/><path d="M0.5 0.5 V13.5 H11.5" fill="none" stroke="#3c444c"/><path d="M8.5 0.8 V3.5 H11.2 Z" fill="#aab6c2"/><g fill="#a9bdd0"><rect x="2.5" y="2.8" width="4.5" height="0.8"/><rect x="2.5" y="4.8" width="4.5" height="0.8"/><rect x="2.5" y="7" width="7" height="0.8"/><rect x="2.5" y="9" width="7" height="0.8"/><rect x="2.5" y="11" width="7" height="0.8"/></g></svg>
<div class="t" style="left:88.5px;top:290px;font-size:12px;color:#333;transform:scaleX(0.9090);transform-origin:0 0;">До 2009 года - Форма 201.03 Расчет по индивидуальному подоходному налогу (XML)</div>
<div class="a" style="left:0px;top:322px;width:530px;height:1px;background:#ebebeb"></div>
<svg class="a" style="left:5px;top:307px" width="14" height="13" viewBox="0 0 14 13"><rect x="0.5" y="0.5" width="12" height="12" fill="#fff" stroke="#9b9b9b"/><path d="M3 6 L6.3 9.6 L13.3 1" stroke="#239048" stroke-width="2" fill="none"/></svg>
<svg class="a" style="left:68px;top:307px" width="12" height="14" viewBox="0 0 12 14"><path d="M0.5 0.5 H8.5 L11.5 3.5 V13.5 H0.5 Z" fill="#f5f9fc" stroke="#6c7680"/><path d="M0.5 0.5 V13.5 H11.5" fill="none" stroke="#3c444c"/><path d="M8.5 0.8 V3.5 H11.2 Z" fill="#aab6c2"/><g fill="#a9bdd0"><rect x="2.5" y="2.8" width="4.5" height="0.8"/><rect x="2.5" y="4.8" width="4.5" height="0.8"/><rect x="2.5" y="7" width="7" height="0.8"/><rect x="2.5" y="9" width="7" height="0.8"/><rect x="2.5" y="11" width="7" height="0.8"/></g></svg>
<div class="t" style="left:88.5px;top:309px;font-size:12px;color:#333;transform:scaleX(0.9160);transform-origin:0 0;">До 2009 года - Форма 307.00 Реестр счетов-фактур (XML)</div>
<div class="a" style="left:0px;top:341px;width:530px;height:1px;background:#ebebeb"></div>
<svg class="a" style="left:5px;top:326px" width="14" height="13" viewBox="0 0 14 13"><rect x="0.5" y="0.5" width="12" height="12" fill="#fff" stroke="#9b9b9b"/><path d="M3 6 L6.3 9.6 L13.3 1" stroke="#239048" stroke-width="2" fill="none"/></svg>
<svg class="a" style="left:68px;top:326px" width="12" height="14" viewBox="0 0 12 14"><path d="M0.5 0.5 H8.5 L11.5 3.5 V13.5 H0.5 Z" fill="#f5f9fc" stroke="#6c7680"/><path d="M0.5 0.5 V13.5 H11.5" fill="none" stroke="#3c444c"/><path d="M8.5 0.8 V3.5 H11.2 Z" fill="#aab6c2"/><g fill="#a9bdd0"><rect x="2.5" y="2.8" width="4.5" height="0.8"/><rect x="2.5" y="4.8" width="4.5" height="0.8"/><rect x="2.5" y="7" width="7" height="0.8"/><rect x="2.5" y="9" width="7" height="0.8"/><rect x="2.5" y="11" width="7" height="0.8"/></g></svg>
<div class="t" style="left:88.5px;top:328px;font-size:12px;color:#333;transform:scaleX(0.9100);transform-origin:0 0;">До 2009 года - Форма 600.00 Декларация по социальному налогу (XML)</div>
</div>
<svg class="a" style="left:745px;top:238px" width="9" height="6" viewBox="0 0 9 6"><path d="M1 5 H8 L4.5 1 Z" fill="#b4b4b4"/></svg>
<div class="a" style="left:746px;top:255px;width:8px;height:306px;background:#d6d6d6;border-radius:4px"></div>
<div class="a" style="left:746px;top:255px;width:8px;height:94px;background:#9f9f9f;border-radius:4px"></div>
<svg class="a" style="left:745px;top:570px" width="9" height="6" viewBox="0 0 9 6"><path d="M1 1 H8 L4.5 5 Z" fill="#555"/></svg>
<div class="a" style="left:761px;top:205px;width:1px;height:390px;background-image:linear-gradient(#c8c8c8 50%,transparent 50%);background-size:1px 4px"></div>
<div class="a" style="left:766px;top:228px;width:580px;height:357px;border:1px solid #b8b8b8;background:#fff"></div>
<div class="a" style="left:766px;top:206px;width:100px;height:23px;border:1px solid #b8b8b8;border-bottom:none;border-radius:3px 3px 0 0;background:#fff"></div>
<div class="t" style="left:775px;top:212px;font-size:12px;color:#333;transform:scaleX(0.9059);transform-origin:0 0;">Журнал отчетов</div>
<div class="b" style="left:775px;top:234px;width:25px;height:21px;border-color:#d6d6d6;box-shadow:0 1px 1px rgba(0,0,0,.12)"></div>
<svg class="a" style="left:781px;top:237px" width="14" height="16" viewBox="0 0 14 16"><path d="M1 0.5 H8.5 L12.5 4.5 V14.5 H1 Z" fill="#c9ccd0"/><path d="M8.5 0.5 V4.5 H12.5" fill="#e2e4e6"/><circle cx="5" cy="11" r="4.2" fill="#a9c4a9"/><path d="M5 8.5 V13.5 M2.5 11 H7.5" stroke="#e8f0e8" stroke-width="1.2"/></svg>
<div class="b" style="left:807px;top:234px;width:60px;height:21px;"></div>
<div class="t" style="left:817px;top:239px;font-size:12px;color:#333;transform:scaleX(0.9040);transform-origin:0 0;">Найти...</div>
<div class="b" style="left:873px;top:234px;width:103px;height:21px;border-color:#dadada;box-shadow:0 1px 1px rgba(0,0,0,.12)"></div>
<div class="t" style="left:882.5px;top:239px;font-size:12px;color:#a6a6a6;transform:scaleX(0.9295);transform-origin:0 0;">Отменить поиск</div>
<div class="b" style="left:990px;top:234px;width:26px;height:21px;"></div>
<svg class="a" style="left:996px;top:238px" width="14" height="14" viewBox="0 0 14 14"><path d="M11.3 4.2 A5 5 0 1 0 11.8 9.5" stroke="#3a9a3e" stroke-width="2" fill="none"/><path d="M8.5 1.2 H12.5 V5.3 Z" fill="#3a9a3e"/></svg>
<div class="b" style="left:1030px;top:234px;width:74px;height:21px;"></div>
<svg class="a" style="left:1035px;top:237px" width="16" height="15" viewBox="0 0 16 15"><path d="M4 1 H9.5 L11.5 3 V6 H4 Z" fill="#fff" stroke="#555" stroke-width="0.8"/><rect x="0.8" y="5.5" width="14" height="6" rx="1.2" fill="#4d6f96"/><rect x="4" y="9" width="7.5" height="5.5" fill="#fff" stroke="#555" stroke-width="0.8"/><rect x="11.5" y="7" width="2" height="1" fill="#dfe8f0"/></svg>
<div class="t" style="left:1053px;top:238.5px;font-size:12px;color:#333;transform:scaleX(0.8903);transform-origin:0 0;">Печать</div>
<svg class="a" style="left:1094px;top:244px" width="7" height="4" viewBox="0 0 7 4"><path d="M0 0 H7 L3.5 4 Z" fill="#444"/></svg>
<div class="b" style="left:1290px;top:234px;width:47px;height:21px;"></div>
<div class="t" style="left:1300px;top:239px;font-size:12px;color:#333;transform:scaleX(0.9008);transform-origin:0 0;">Еще</div>
<svg class="a" style="left:1325px;top:244px" width="7" height="4" viewBox="0 0 7 4"><path d="M0 0 H7 L3.5 4 Z" fill="#444"/></svg>
<div class="a" style="left:775px;top:259px;width:562px;height:319px;border:1px solid #a8a8a8;background:#fff"></div>
<div class="a" style="left:776px;top:260px;width:560px;height:20px;background:#f0f0f0"></div>
<div class="a" style="left:796px;top:261px;width:1px;height:19px;background:#d9d9d9"></div>
<div class="a" style="left:995px;top:261px;width:1px;height:19px;background:#d9d9d9"></div>
<div class="a" style="left:1152px;top:261px;width:1px;height:19px;background:#d9d9d9"></div>
<div class="a" style="left:1249px;top:261px;width:1px;height:19px;background:#d9d9d9"></div>
<div class="t" style="left:801px;top:264px;font-size:12px;color:#555;transform:scaleX(0.9024);transform-origin:0 0;">Наименование отчета</div>
<div class="t" style="left:1000px;top:264px;font-size:12px;color:#555;transform:scaleX(0.9027);transform-origin:0 0;">Период</div>
<div class="t" style="left:1157px;top:264px;font-size:12px;color:#555;transform:scaleX(0.9188);transform-origin:0 0;">Организация</div>
<div class="a" style="left:1250px;top:260px;width:86px;height:20px;overflow:hidden">
<div class="t" style="left:4px;top:4px;font-size:12px;color:#555;transform:scaleX(0.9100);transform-origin:0 0;">Налоговый ком...</div>
</div>
<div class="a" style="left:776px;top:280px;width:560px;height:22px;border:1px dotted #222"></div>
<svg class="a" style="left:782px;top:563px" width="6" height="8" viewBox="0 0 6 8"><path d="M5 0.5 V7.5 L1 4 Z" fill="#bdbdbd"/></svg>
<div class="a" style="left:799px;top:562px;width:399px;height:7px;background:#d4d4d4;border-radius:4px"></div>
<div class="a" style="left:799px;top:562px;width:253px;height:7px;background:#9e9e9e;border-radius:4px"></div>
<svg class="a" style="left:1207px;top:562px" width="6" height="8" viewBox="0 0 6 8"><path d="M1 0.5 V7.5 L5 4 Z" fill="#555"/></svg>
<div class="a" style="left:1240px;top:556px;width:97px;height:22px;border:1px solid #b8b8b8;border-right-color:#a8a8a8;background:linear-gradient(#fff,#f0f0f0)"></div>
<div class="a" style="left:1264px;top:557px;width:1px;height:20px;background:#c8c8c8"></div>
<div class="a" style="left:1288px;top:557px;width:1px;height:20px;background:#c8c8c8"></div>
<div class="a" style="left:1312px;top:557px;width:1px;height:20px;background:#c8c8c8"></div>
<svg class="a" style="left:1246px;top:561px" width="12" height="12" viewBox="0 0 12 12"><rect x="1" y="1" width="10" height="1.5" fill="#333"/><path d="M1.5 9 H10.5 L6 3.5 Z" fill="#333"/></svg>
<svg class="a" style="left:1270px;top:561px" width="12" height="12" viewBox="0 0 12 12"><path d="M1.5 8 H10.5 L6 3.5 Z" fill="#333"/></svg>
<svg class="a" style="left:1294px;top:561px" width="12" height="12" viewBox="0 0 12 12"><path d="M1.5 4 H10.5 L6 8.5 Z" fill="#333"/></svg>
<svg class="a" style="left:1318px;top:561px" width="12" height="12" viewBox="0 0 12 12"><path d="M1.5 3 H10.5 L6 8.5 Z" fill="#333"/><rect x="1" y="9.5" width="10" height="1.5" fill="#333"/></svg>
<div class="a" style="left:218px;top:381px;width:499px;height:25px;border:2.5px solid #8e1515"></div>
<svg class="a" style="left:160px;top:215px" width="110" height="125" viewBox="0 0 110 125"><path d="M10.5 114.3 L82.4 23.2 L78.6 21.4 L95.5 12.5 L90.2 30.9 L87.7 27.5 L13.5 116.7 Z" fill="#b51414" stroke="#b51414" stroke-width="0.8" stroke-linejoin="round"/></svg>
<!--/FORM-->
</body></html>
